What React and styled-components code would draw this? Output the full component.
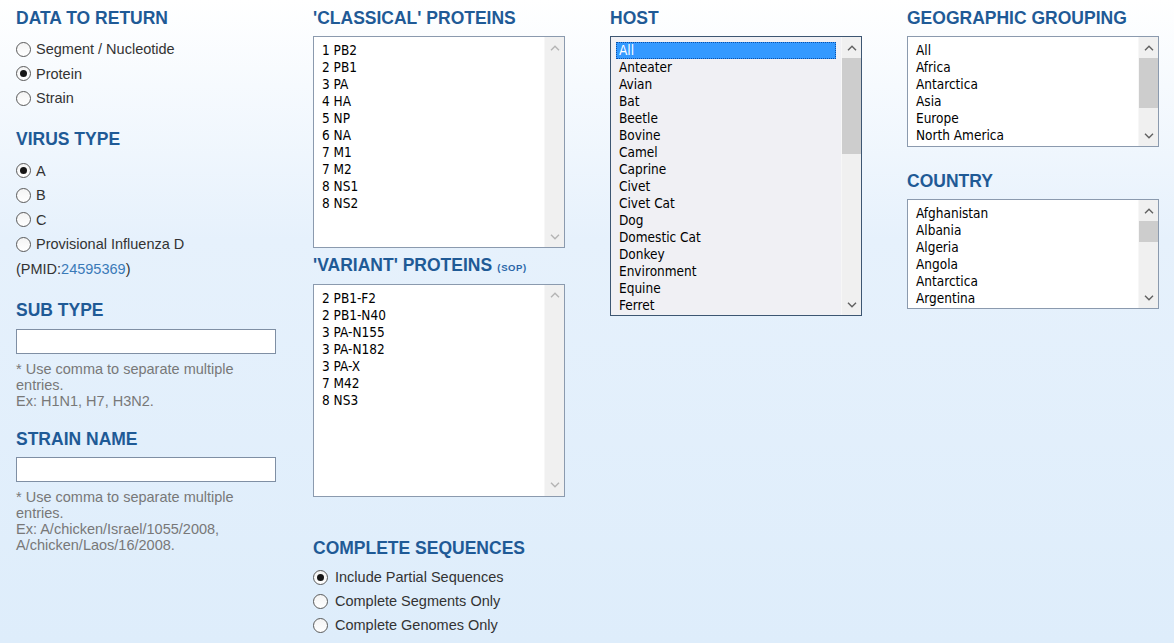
import React from 'react'
import styled, { createGlobalStyle } from 'styled-components'

const GlobalStyle = createGlobalStyle`
    html, body {
        margin:0;
        padding:0;
    }
    body {
        font-family:"Liberation Sans", Arial, sans-serif;
        background:linear-gradient(180deg, #ffffff 0px, #e6f1fc 240px, #deedfb 643px);
        min-height:643px;
    }
`;

const Page = styled.div`
    display:grid;
    grid-template-columns:repeat(4, 297px);
    padding:8px 0 0 16px;
    min-height:635px;
    box-sizing:border-box;
`;

const Column = styled.div`
    display:flex;
    flex-direction:column;
    align-items:flex-start;
`;

const Heading = styled.h2`
    margin:${props => props.$mt || 0}px 0 0 0;
    font-size:17.5px;
    line-height:20px;
    height:20px;
    font-weight:700;
    color:#1f5a96;
    text-transform:uppercase;
    white-space:nowrap;
`;

const SopLink = styled.a`
    font-size:9.5px;
    line-height:10px;
    font-weight:700;
    color:#2a66a8;
    text-decoration:none;
    letter-spacing:.6px;
    margin-left:2px;
`;

const RadioGroup = styled.div`
    margin-top:${props => props.$mt || 9}px;
    display:flex;
    flex-direction:column;
`;

const RadioRow = styled.label`
    display:flex;
    align-items:center;
    height:${props => props.$h || 24.5}px;
    font-size:14.5px;
    color:#333;
    white-space:nowrap;
`;

const RadioCircle = styled.span`
    width:15px;
    height:15px;
    box-sizing:border-box;
    border:1px solid #5a5a5a;
    border-radius:50%;
    background:linear-gradient(180deg, #f4f4f4, #ffffff);
    margin-right:${props => props.$gap || 5}px;
    display:flex;
    align-items:center;
    justify-content:center;
    &::after {
        content:'';
        width:7px;
        height:7px;
        border-radius:50%;
        background:${props => props.$checked ? '#161616' : 'transparent'};
    }
`;

const NoteLine = styled.div`
    height:24.5px;
    line-height:24.5px;
    font-size:14.5px;
    color:#333;
`;

const PmidLink = styled.a`
    color:#3a7ab8;
    text-decoration:none;
`;

const TextInput = styled.input`
    margin-top:8.5px;
    width:260px;
    height:25px;
    box-sizing:border-box;
    border:1px solid #7f8fa4;
    background:#fff;
    padding:0 4px;
    font-family:inherit;
    font-size:14px;
`;

const Helper = styled.div`
    margin-top:7px;
    width:260px;
    font-size:14.5px;
    line-height:16px;
    color:#787878;
`;

const Listbox = styled.div`
    margin-top:${props => props.$mt || 8}px;
    width:252px;
    height:${props => props.$h}px;
    box-sizing:border-box;
    border:1px solid ${props => props.$focused ? '#3d5672' : '#8b9aae'};
    background:${props => props.$focused ? '#f0f0f4' : '#ffffff'};
    display:flex;
    overflow:hidden;
`;

const OptionList = styled.ul`
    flex:1;
    list-style:none;
    margin:0;
    padding:5px 5px 4px;
    font-family:"DejaVu Sans Condensed", "DejaVu Sans", Tahoma, sans-serif;
    font-size:13.5px;
    color:#000;
`;

const Option = styled.li`
    height:17px;
    line-height:17px;
    padding:0 3px;
    box-sizing:border-box;
    white-space:nowrap;
    background:${props => props.$selected ? '#3399ff' : 'transparent'};
    color:${props => props.$selected ? '#ffffff' : '#000'};
    outline:${props => props.$selected ? '1px dotted #0b4fa8' : 'none'};
    outline-offset:-1px;
`;

const Scrollbar = styled.div`
    width:19px;
    background:#f0f0f0;
    border-left:1px solid #f7f7f7;
    display:flex;
    flex-direction:column;
`;

const ArrowButton = styled.div`
    height:21px;
    display:flex;
    align-items:center;
    justify-content:center;
    color:${props => props.$enabled ? '#606060' : '#b4b4b4'};
`;

const Track = styled.div`
    flex:1;
    position:relative;
`;

const Thumb = styled.div`
    position:absolute;
    left:0;
    right:0;
    top:0;
    height:${props => props.$h}px;
    background:#cdcdcd;
`;

const Chevron = ({ up }) => (
    <svg width="10" height="6" viewBox="0 0 10 6">
        <path
            d={up ? 'M1 5.2 L5 1.2 L9 5.2' : 'M1 0.8 L5 4.8 L9 0.8'}
            fill="none"
            stroke="currentColor"
            strokeWidth="1.4"
        />
    </svg>
)

function SelectBox({ items, height, mt, focused, selected, thumb }) {
    const enabled = !!thumb
    return (
        <Listbox $h={height} $mt={mt} $focused={focused}>
            <OptionList>
                {items.map((item, i) => (
                    <Option key={item} $selected={selected === i}>{item}</Option>
                ))}
            </OptionList>
            <Scrollbar>
                <ArrowButton $enabled={enabled}><Chevron up /></ArrowButton>
                <Track>{thumb ? <Thumb $h={thumb} /> : null}</Track>
                <ArrowButton $enabled={enabled}><Chevron /></ArrowButton>
            </Scrollbar>
        </Listbox>
    )
}

function Radio({ label, checked, h, gap }) {
    return (
        <RadioRow $h={h}>
            <RadioCircle $checked={checked} $gap={gap} />
            {label}
        </RadioRow>
    )
}

const classical = ['1 PB2', '2 PB1', '3 PA', '4 HA', '5 NP', '6 NA', '7 M1', '7 M2', '8 NS1', '8 NS2']
const variant = ['2 PB1-F2', '2 PB1-N40', '3 PA-N155', '3 PA-N182', '3 PA-X', '7 M42', '8 NS3']
const hosts = ['All', 'Anteater', 'Avian', 'Bat', 'Beetle', 'Bovine', 'Camel', 'Caprine', 'Civet', 'Civet Cat', 'Dog', 'Domestic Cat', 'Donkey', 'Environment', 'Equine', 'Ferret']
const regions = ['All', 'Africa', 'Antarctica', 'Asia', 'Europe', 'North America']
const countries = ['Afghanistan', 'Albania', 'Algeria', 'Angola', 'Antarctica', 'Argentina']

export default function App() {
    return (
        <>
            <GlobalStyle />
            <Page>
                <Column>
                    <Heading>Data to Return</Heading>
                    <RadioGroup>
                        <Radio label="Segment / Nucleotide" />
                        <Radio label="Protein" checked />
                        <Radio label="Strain" />
                    </RadioGroup>

                    <Heading $mt={18.5}>Virus Type</Heading>
                    <RadioGroup $mt={9.5}>
                        <Radio label="A" checked />
                        <Radio label="B" />
                        <Radio label="C" />
                        <Radio label="Provisional Influenza D" />
                        <NoteLine>(PMID:<PmidLink href="#">24595369</PmidLink>)</NoteLine>
                    </RadioGroup>

                    <Heading $mt={19}>Sub Type</Heading>
                    <TextInput type="text" />
                    <Helper>* Use comma to separate multiple entries.<br />Ex: H1N1, H7, H3N2.</Helper>

                    <Heading $mt={20}>Strain Name</Heading>
                    <TextInput type="text" />
                    <Helper>* Use comma to separate multiple entries.<br />Ex: A/chicken/Israel/1055/2008, A/chicken/Laos/16/2008.</Helper>
                </Column>

                <Column>
                    <Heading>'Classical' Proteins</Heading>
                    <SelectBox items={classical} height={212} />
                    <Heading $mt={6.5}>'Variant' Proteins<SopLink href="#"> (SOP)</SopLink></Heading>
                    <SelectBox items={variant} height={213} mt={9} />

                    <Heading $mt={41}>Complete Sequences</Heading>
                    <RadioGroup $mt={7.5}>
                        <Radio label="Include Partial Sequences" checked h={24} gap={7} />
                        <Radio label="Complete Segments Only" h={24} gap={7} />
                        <Radio label="Complete Genomes Only" h={24} gap={7} />
                    </RadioGroup>
                </Column>

                <Column>
                    <Heading>Host</Heading>
                    <SelectBox items={hosts} height={280} focused selected={0} thumb={96} />
                </Column>

                <Column>
                    <Heading>Geographic Grouping</Heading>
                    <SelectBox items={regions} height={111} thumb={50} />
                    <Heading $mt={24}>Country</Heading>
                    <SelectBox items={countries} height={110} thumb={21} />
                </Column>
            </Page>
        </>
    )
}
